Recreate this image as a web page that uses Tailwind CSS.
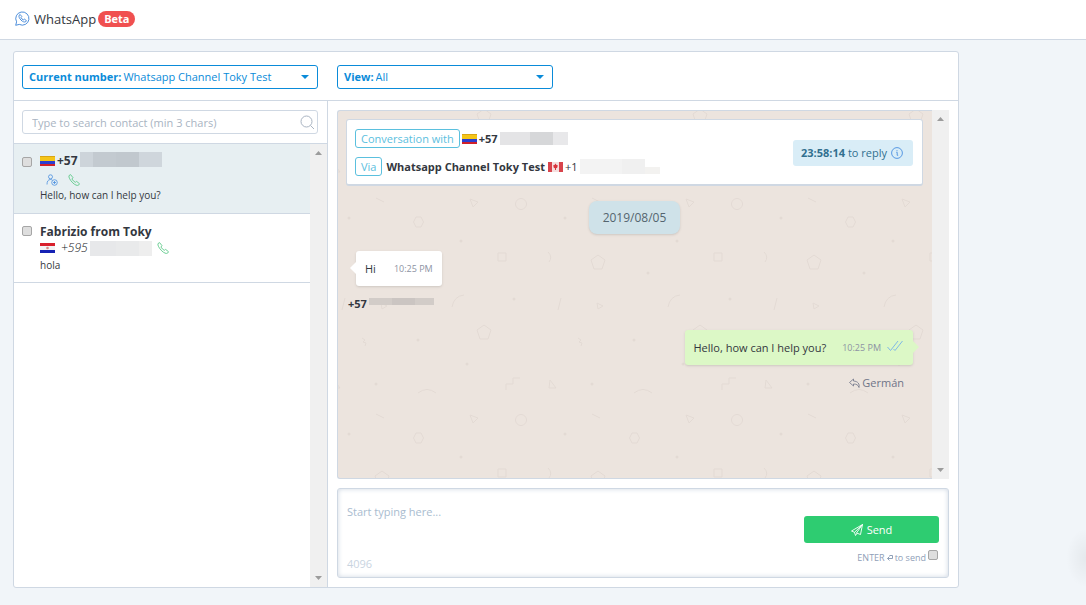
<!DOCTYPE html>
<html lang="en">
<head>
  <meta charset="UTF-8" />
  <meta name="viewport" content="width=device-width, initial-scale=1" />
  <title>WhatsApp</title>
  <script src="https://cdn.jsdelivr.net/npm/@tailwindcss/browser@4"></script>
</head>
<body class="min-h-screen flex flex-col bg-[#f1f5f9] font-['Open_Sans',sans-serif] text-[11px] leading-4 text-[#333740]">

  <!-- Shared icons -->
  <svg class="hidden">
    <symbol id="phone" viewBox="0 0 12 12">
      <path d="M1 1.6 2.6.6 5 3.7 3.9 5c.8 1.400 2 2.600 3.400 3.300l1.300-.9L11.500 9.700l-1 1.500c-1.200.7-3.500-.2-5.700-2.300C2 6.200.4 3 1 1.600Z" fill="none" stroke="currentColor" stroke-width=".9" stroke-linejoin="round" />
    </symbol>
    <symbol id="flag-co" viewBox="0 0 15 10">
      <path d="M0 0h15v5H0z" fill="#f5c518" />
      <path d="M0 5h15v3H0z" fill="#2b3fd0" />
      <path d="M0 8h15v2H0z" fill="#d0202a" />
      <path d="M0 0h15v1H0z" fill="#d9a514" />
    </symbol>
    <symbol id="flag-py" viewBox="0 0 15 10">
      <path d="M0 0h15v3H0z" fill="#d8202c" />
      <path d="M0 3h15v4H0z" fill="#f2f2f4" />
      <path d="M0 7h15v3H0z" fill="#1522b4" />
      <circle cx="7.500" cy="5" r="1.300" fill="#d98a86" />
    </symbol>
    <symbol id="flag-ca" viewBox="0 0 15 10">
      <path d="M0 0h15v10H0z" fill="#f5dede" />
      <path d="M0 0h4v10H0zM11 0h4v10h-4z" fill="#d8444c" />
      <path d="m7.500 1.500 1 1.500 1.300.3-.6 2.400-1.200.6V8h-1V6.300l-1.200-.6-.6-2.400L6.500 3z" fill="#d8343c" />
    </symbol>
  </svg>

  <!-- Top bar -->
  <header class="h-10 flex items-center gap-0.5 px-[15px] pb-0.5 bg-white border-b border-[#cfd8e3]">
    <svg class="w-[15px] h-[15px] mr-0.5 text-[#3b82d6]" viewBox="0 0 15 15" fill="none" stroke="currentColor" stroke-width=".9" stroke-linejoin="round">
      <path d="M1.600 10.800A6.600 6.600 0 1 1 4.300 13.400L.7 14.300z" />
      <path d="M4.100 4.300 5.200 3.500 6.800 5.600 6 6.600c.5 1 1.300 1.800 2.300 2.300l1-.8 2.100 1.500-.8 1.200c-1 .6-2.900 0-4.600-1.700C4.300 7.400 3.600 5.400 4.100 4.300Z" />
    </svg>
    <h1 class="text-[13px] leading-5">WhatsApp</h1>
    <span class="px-1.5 rounded-full bg-[#f05050] text-[11px] leading-4 font-bold text-white">Beta</span>
  </header>

  <div class="flex-1 flex pt-[11px] pb-[17px] pl-[13px]">
    <main class="flex-1 min-w-0 flex flex-col bg-white border border-[#cfd8e3] rounded-[3px]">

      <!-- Filters -->
      <div class="flex gap-[19px] px-2 pt-[13px] pb-[11px] border-b border-[#cfd8e3]">
        <div class="relative w-[296px] h-6 flex items-center gap-0.5 px-1.5 border border-[#0a8bd9] rounded-[3px] text-[#0a8bd9]">
          <label for="number" class="font-bold whitespace-nowrap">Current number:</label>
          <select id="number" class="flex-1 min-w-0 appearance-none bg-transparent outline-none">
            <option>Whatsapp Channel Toky Test</option>
          </select>
          <svg class="absolute right-2 w-2 h-1 pointer-events-none" viewBox="0 0 8 4"><path d="M0 0h8L4 4z" fill="currentColor" /></svg>
        </div>
        <div class="relative w-[216px] h-6 flex items-center gap-0.5 px-1.5 border border-[#0a8bd9] rounded-[3px] text-[#0a8bd9]">
          <label for="view" class="font-bold whitespace-nowrap">View:</label>
          <select id="view" class="flex-1 min-w-0 appearance-none bg-transparent outline-none">
            <option>All</option>
          </select>
          <svg class="absolute right-2 w-2 h-1 pointer-events-none" viewBox="0 0 8 4"><path d="M0 0h8L4 4z" fill="currentColor" /></svg>
        </div>
      </div>

      <div class="flex-1 flex">

        <!-- Contacts -->
        <aside class="w-[314px] shrink-0 flex flex-col border-r border-[#cfd8e3]">
          <div class="relative pl-2 pr-[9px] py-[9px] border-b border-[#cfd8e3]">
            <input
              type="search"
              aria-label="Search contact"
              placeholder="Type to search contact (min 3 chars)"
              class="block w-full h-6 px-[9px] border border-[#cfd8e3] rounded-[3px] outline-none placeholder:text-[#a9b4c2]"
            />
            <svg class="absolute right-3 top-3.5 w-[15px] h-[15px] text-[#a9b4c2]" viewBox="0 0 15 15" fill="none" stroke="currentColor">
              <circle cx="6.500" cy="6.500" r="5.500" />
              <path d="m10.500 10.500 3.500 3.500" />
            </svg>
          </div>

          <div class="flex-1 flex">
            <ul class="flex-1">
              <li class="flex gap-2 pl-2 pt-[9px] pb-2.5 bg-[#e7eff2] border-b border-[#cfd8e3]">
                <input type="checkbox" aria-label="Select +57" class="appearance-none w-2.5 h-2.5 mt-1 bg-[#dedede] border border-[#a6a6a6] rounded-[2px]" />
                <div>
                  <div class="flex items-center gap-0.5 h-4">
                    <svg class="w-[15px] h-2.5"><use href="#flag-co" /></svg>
                    <b class="text-[12px] leading-[18px]">+57</b>
                    <span class="flex h-[15px] mb-1">
                      <span class="w-[13px] bg-[#cdd4da]"></span>
                      <span class="w-[23px] bg-[#c3cad0]"></span>
                      <span class="w-[23px] bg-[#c1c8ce]"></span>
                      <span class="w-[23px] bg-[#cfd6dc]"></span>
                    </span>
                  </div>
                  <div class="flex items-end gap-2.5 h-[18px] pb-px pl-1.5">
                    <svg class="w-3 h-3 text-[#4a8fe0]" viewBox="0 0 12 12" fill="none" stroke="currentColor" stroke-width=".8">
                      <circle cx="4.500" cy="2.800" r="2" />
                      <path d="M1 10.500C1 7.500 2 5.500 4.500 5.500c.8 0 1.300.2 1.800.6" />
                      <circle cx="8.500" cy="8.500" r="2.800" />
                      <path d="M8.500 7v3M7 8.500h3" />
                    </svg>
                    <svg class="w-3 h-3 text-[#5fc98a]"><use href="#phone" /></svg>
                  </div>
                  <p class="text-[10px] leading-4">Hello, how can I help you?</p>
                </div>
              </li>
              <li class="flex gap-2 pl-2 pt-[9px] pb-[9px] border-b border-[#cfd8e3]">
                <input type="checkbox" aria-label="Select Fabrizio from Toky" class="appearance-none w-2.5 h-2.5 mt-[3px] bg-[#dedede] border border-[#a6a6a6] rounded-[2px]" />
                <div>
                  <div class="h-4 text-[12px] leading-[18px] font-bold">Fabrizio from Toky</div>
                  <div class="flex items-center h-[18px]">
                    <svg class="w-[15px] h-2.5 mr-1.5"><use href="#flag-py" /></svg>
                    <i class="text-[12px] font-light text-[#14161c]">+595</i>
                    <span class="flex h-[15px] ml-0.5 mr-[5px]">
                      <span class="w-[26px] bg-[#e7e8ea]"></span>
                      <span class="w-[23px] bg-[#e9eaeb]"></span>
                      <span class="w-[13px] bg-[#eeeeee]"></span>
                    </span>
                    <svg class="w-3 h-3 text-[#5fc98a]"><use href="#phone" /></svg>
                  </div>
                  <p class="text-[10px] leading-4">hola</p>
                </div>
              </li>
            </ul>
            <div class="w-[17px] flex flex-col justify-between items-center py-1.5 bg-[#f0f0f0]">
              <svg class="w-[7px] h-1 mt-px" viewBox="0 0 7 4"><path d="M0 4h7L3.500 0z" fill="#9c9c9c" /></svg>
              <svg class="w-[7px] h-1 mb-px" viewBox="0 0 7 4"><path d="M0 0h7L3.500 4z" fill="#9c9c9c" /></svg>
            </div>
          </div>
        </aside>

        <!-- Conversation -->
        <section class="flex-1 min-w-0 flex flex-col gap-[9px] p-[9px]">
          <div class="flex-1 flex">
            <div class="relative flex-1 min-w-0 pl-2 pt-2 bg-[#ece4de] border border-r-0 border-[#cfd8e3] rounded-l-[3px]">
              <!-- Wallpaper -->
              <svg class="absolute inset-0 w-full h-full" aria-hidden="true">
                <pattern id="doodles" width="216" height="216" patternUnits="userSpaceOnUse">
                  <g fill="none" stroke="#e3dad4">
                    <path d="m38 87 8 4M132 88l8 3-5 5zM7 187l-3 12M43 192l6 3-5 3z" />
                    <circle cx="183" cy="93" r="5.500" />
                    <path d="m78 106h5l2.500 5-2.500 5h-5l-2.500-5z" />
                    <path d="M160 142h8v8h-8zM210 141q5 5 1 10M114 196q2-11 12-12M80 66q9-7 18 0" />
                    <path d="m44 144 7 5-3 9h-8l-3-9z" />
                    <path d="m146-2 7 5-3 9h-8l-3-9zM146 214l7 5-3 9h-8l-3-9z" />
                    <path d="m24 11 3 2-2 2 3 1-1 3M168 63v-6h7v-6h7M212 53l-1 8h7zM-4 53l-1 8h7z" />
                  </g>
                  <g fill="#e3dad4">
                    <circle cx="11" cy="107" r="1.500" />
                    <circle cx="123" cy="130" r="1.500" />
                    <circle cx="94" cy="162" r="1.500" />
                    <circle cx="176" cy="188" r="1.500" />
                    <circle cx="80" cy="13" r="1.500" />
                    <circle cx="129" cy="37" r="1.500" />
                    <circle cx="38" cy="57" r="1.500" />
                  </g>
                </pattern>
                <rect width="100%" height="100%" fill="url(#doodles)" />
              </svg>

              <div class="relative flex flex-col">
                <div class="flex items-center justify-between mr-[9px] pl-2 pr-[9px] pt-[9px] pb-2 bg-white border border-b-2 border-[#cfd8e3] rounded-[3px]">
                  <div class="flex flex-col gap-[9px]">
                    <div class="flex items-center gap-0.5">
                      <span class="px-[5px] border border-[#5bc0de] rounded-[3px] leading-[17px] text-[#5bc0de]">Conversation with</span>
                      <svg class="w-[15px] h-2.5"><use href="#flag-co" /></svg>
                      <b>+57</b>
                      <span class="flex h-[13px]">
                        <span class="w-[30px] bg-[#e4e4e6]"></span>
                        <span class="w-[23px] bg-[#d6d7d9]"></span>
                        <span class="w-[15px] bg-[#e8e8ea]"></span>
                      </span>
                    </div>
                    <div class="flex items-center gap-0.5">
                      <span class="mr-0.5 px-[5px] border border-[#5bc0de] rounded-[3px] leading-[17px] text-[#5bc0de]">Via</span>
                      <b class="mr-px">Whatsapp Channel Toky Test</b>
                      <svg class="w-[15px] h-2.5"><use href="#flag-ca" /></svg>
                      <span>+1</span>
                      <span class="flex h-[15px]">
                        <span class="w-[42px] bg-[#f3f3f3]"></span>
                        <span class="w-[23px] bg-[#f0f0f0]"></span>
                        <span class="w-[15px] mt-2 bg-[#f3f2f0]"></span>
                      </span>
                    </div>
                  </div>
                  <div class="flex items-center gap-1 h-[26px] pl-2 pr-2.5 rounded-[3px] bg-[#d9edf7] text-[#31708f]">
                    <span><b>23:58:14</b> to reply</span>
                    <svg class="w-3 h-3 text-[#4a8fe0]" viewBox="0 0 12 12" fill="none" stroke="currentColor" stroke-width=".9">
                      <circle cx="6" cy="6" r="5.400" />
                      <path d="M5.300 5.300h.9v3h1M6 3.200v1" />
                    </svg>
                  </div>
                </div>

                <time class="self-center mt-[15px] mr-[9px] px-3.5 rounded-lg bg-[#cfe2e9] text-[12px] leading-[33px] text-[#54656f] shadow-sm">2019/08/05</time>

                <div class="relative self-start flex items-center gap-[18px] h-[35px] mt-[17px] ml-[10px] px-[9px] rounded-[3px] bg-white shadow-sm">
                  <svg class="absolute -left-1.5 top-[11px] w-1.5 h-3" viewBox="0 0 6 12"><path d="M6 0v12L0 6z" fill="#fff" /></svg>
                  <p>Hi</p>
                  <time class="text-[9px] text-[#8d93a3]">10:25 PM</time>
                </div>
                <div class="flex gap-0.5 mt-2.5 pl-0.5">
                  <b>+57</b>
                  <span class="flex h-[7px] mt-0.5">
                    <span class="w-[23px] bg-[#d2ccc8]"></span>
                    <span class="w-[23px] bg-[#cbc5c2]"></span>
                    <span class="w-[19px] bg-[#d2ccc8]"></span>
                  </span>
                </div>

                <div class="relative self-end flex items-center h-[35px] mt-[18px] mr-[19px] pl-2 pr-2.5 rounded-[3px] bg-[#dcf8c6] shadow-sm">
                  <p class="mr-4">Hello, how can I help you?</p>
                  <time class="mr-1.5 text-[9px] text-[#8d93a3]">10:25 PM</time>
                  <svg class="w-4 h-3 mb-1 text-[#7fb8e6]" viewBox="0 0 16 12" fill="none" stroke="currentColor">
                    <path d="m.5 7 3 3.500L11 1M6.500 9l1.500 1.500L15.500 1" />
                  </svg>
                  <svg class="absolute -right-1.5 top-[11px] w-1.5 h-3" viewBox="0 0 6 12"><path d="M0 0v12l6-6z" fill="#dcf8c6" /></svg>
                </div>
                <div class="self-end flex items-center gap-0.5 mt-2.5 mr-7 text-[#6f7488]">
                  <svg class="w-[11px] h-[11px]" viewBox="0 0 11 11" fill="none" stroke="currentColor" stroke-width=".8" stroke-linejoin="round">
                    <path d="M4.500 1 .5 4.500l4 3.500V6c3 0 4.500.8 5.500 3.500C10.800 6 9 3.300 4.500 3z" />
                  </svg>
                  <span>Germán</span>
                </div>
              </div>
            </div>
            <div class="w-[17px] flex flex-col justify-between items-center py-1.5 bg-[#f0f0f0]">
              <svg class="w-[7px] h-1 mt-px" viewBox="0 0 7 4"><path d="M0 4h7L3.500 0z" fill="#9c9c9c" /></svg>
              <svg class="w-[7px] h-1 mb-px" viewBox="0 0 7 4"><path d="M0 0h7L3.500 4z" fill="#9c9c9c" /></svg>
            </div>
          </div>

          <!-- Composer -->
          <form class="min-h-[90px] flex border border-[#cfd8e3] rounded-[3px] px-[9px] pt-[9px] pb-[5px] shadow-[inset_0_0_5px_#cfd8e3]">
            <div class="flex-1 flex flex-col">
              <textarea aria-label="Message" placeholder="Start typing here..." class="block w-full h-[50px] pt-1.5 bg-transparent resize-none outline-none placeholder:text-[#a9bccf]"></textarea>
              <span class="mt-auto text-[#c9d4df]">4096</span>
            </div>
            <div class="w-[135px] flex flex-col items-end gap-[7px] pt-[18px]">
              <button type="button" class="w-full h-[27px] flex items-center justify-center gap-1 rounded-[3px] bg-[#2ecc71] text-[11px] text-white">
                <svg class="w-3 h-3" viewBox="0 0 12 12" fill="none" stroke="currentColor" stroke-width=".9" stroke-linejoin="round">
                  <path d="M11.500.5.500 7l3 1.300zM11.500.5 9.500 10.500 5.500 9zM3.500 8.300l1 3.200 1.500-2.300" />
                </svg>
                Send
              </button>
              <label class="flex gap-0.5 pr-px text-[9px] text-[#8fa0b8]">
                <span class="flex items-center gap-0.5">
                  ENTER
                  <svg class="w-1.5 h-1.5" viewBox="0 0 6 6" fill="none" stroke="currentColor"><path d="M2.500.5h3v3h-5M2.500 1.500l-2 2 2 2" /></svg>
                  to send
                </span>
                <input type="checkbox" class="appearance-none w-2.5 h-2.5 bg-[#dedede] border border-[#a6a6a6] rounded-[2px]" />
              </label>
            </div>
          </form>
        </section>
      </div>
    </main>

    <!-- Rail with the docked widget's shadow -->
    <div class="w-[127px] shrink-0 flex items-end justify-end">
      <div class="w-5 h-[60px] bg-radial-[at_100%_50%] from-black/5 to-transparent to-70%"></div>
    </div>
  </div>
</body>
</html>
